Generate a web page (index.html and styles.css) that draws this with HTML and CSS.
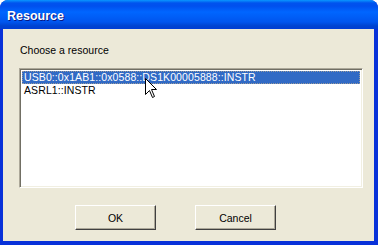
FILE: index.html
```html
<!DOCTYPE html>
<html lang="en">
<head>
    <meta charset="UTF-8">
    <title>Resource</title>
    <link rel="stylesheet" href="styles.css">
</head>
<body>
    <div class="window">
        <div class="titlebar">
            <span class="title">Resource</span>
        </div>
        <div class="client">
            <div class="prompt">Choose a resource</div>
            <ul class="listbox">
                <li class="item selected">USB0::0x1AB1::0x0588::DS1K00005888::INSTR</li>
                <li class="item">ASRL1::INSTR</li>
            </ul>
            <div class="buttons">
                <button class="btn">OK</button>
                <button class="btn">Cancel</button>
            </div>
        </div>
        <svg class="cursor" width="13" height="21" viewBox="0 0 13 21">
            <path d="M0.5 0.5 L0.5 16.5 L4.5 12.5 L7.5 19.5 L9.5 18.5 L6.5 11.5 L11.5 11.5 Z" fill="#fff" stroke="#000" stroke-width="1"/>
        </svg>
    </div>
</body>
</html>
```

FILE: styles.css
```css
body {
    margin: 0;
    background: #ffffff;
    font-family: "Liberation Sans", Arial, sans-serif;
}

.window {
    position: relative;
    width: 378px;
    height: 245px;
    box-sizing: border-box;
    border-radius: 8px 8px 0 0;
    background: #0831d9;
    padding: 0 4px 4px 3px;
    display: flex;
    flex-direction: column;
}

.titlebar {
    height: 29px;
    margin: 0 -4px 0 -3px;
    border-radius: 8px 8px 0 0;
    background: linear-gradient(to bottom, #0997ff 0, #0053ee 3px, #0050ee 6px, #0066ff 12px, #0055ee 22px, #0043cf 26px, #003dd7 29px);
    display: flex;
    align-items: center;
    padding-left: 7px;
}

.title {
    color: #ffffff;
    font-weight: bold;
    font-size: 12.5px;
    text-shadow: 1px 1px 0 #0a1883;
    margin-top: 2px;
}

.client {
    flex: 1;
    background: #ece9d8;
    display: flex;
    flex-direction: column;
    padding: 15px 0 0 16px;
}

.prompt {
    font-size: 10.5px;
    line-height: 13px;
    color: #000000;
    padding-left: 1px;
}

.listbox {
    list-style: none;
    margin: 11px 0 0 0;
    padding: 1px;
    width: 344px;
    height: 120px;
    box-sizing: border-box;
    background: #ffffff;
    border: 1px solid;
    border-color: #aca899 #ffffff #ffffff #aca899;
    box-shadow: inset 1px 1px 0 #716f64, inset -1px -1px 0 #f1efe2;
    padding: 2px 2px 2px 2px;
}

.item {
    font-size: 10.5px;
    line-height: 13px;
    height: 13px;
    padding-left: 2px;
    color: #000000;
    letter-spacing: 0.1px;
}

.selected {
    background: #316ac5;
    color: #ffffff;
    outline: 1px dotted #9a9a9a;
    outline-offset: -1px;
}

.buttons {
    display: flex;
    gap: 39px;
    margin: 17px 0 0 56px;
}

.btn {
    width: 81px;
    height: 25px;
    background: #ece9d8;
    border: 1px solid;
    border-color: #ffffff #404040 #404040 #ffffff;
    box-shadow: inset -1px -1px 0 #aca899;
    font-family: "Liberation Sans", Arial, sans-serif;
    font-size: 10.5px;
    color: #000000;
    padding: 0;
}

.cursor {
    position: absolute;
    left: 145px;
    top: 78px;
}
```
